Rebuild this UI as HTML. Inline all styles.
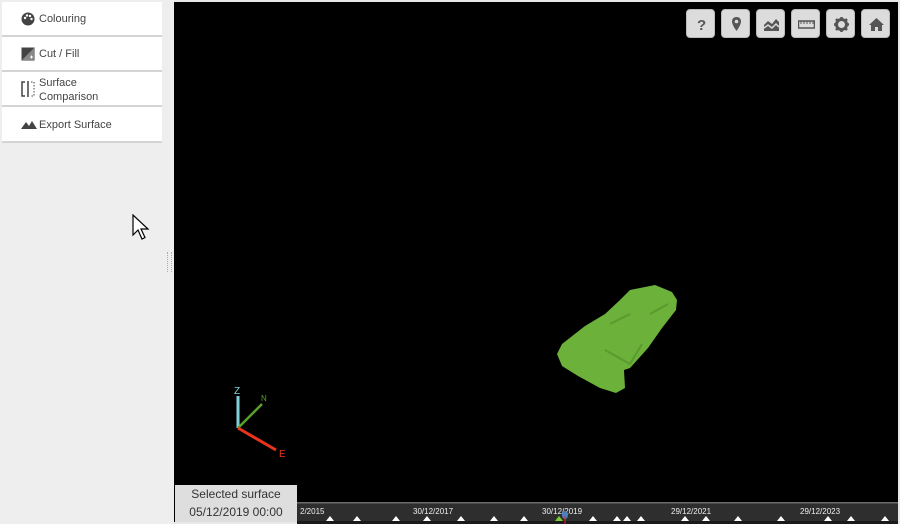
<!DOCTYPE html>
<html><head><style>
body{margin:0;width:900px;height:524px;background:#e8e8e8;position:relative;overflow:hidden;font-family:"Liberation Sans",sans-serif}
.side{position:absolute;left:0;top:0;width:174px;height:524px;background:#eeeeee}
.item{position:absolute;left:2px;width:160px;background:#fff;border-bottom:2px solid #d4d4d4;font-size:11px;color:#444}
.item span{position:absolute;left:37px}
.ic{position:absolute;left:19px}
.canvas{position:absolute;left:174px;top:2px;width:724px;height:520px;background:#000}
.btn{position:absolute;top:9px;width:29px;height:29px;background:#dcdcdc;border-radius:4px;border:1px solid #bbb;box-sizing:border-box}
.btn svg{position:absolute;left:6px;top:6px}
</style></head><body>
<div class="side">
<div class="item" style="top:2px;height:33px"><svg class="ic" style="top:10px" width="14" height="14" viewBox="0 0 14 14"><circle cx="7" cy="7" r="6.5" fill="#444"/><circle cx="4" cy="6" r="1.2" fill="#fff"/><circle cx="6" cy="3.5" r="1.2" fill="#fff"/><circle cx="9" cy="4" r="1.2" fill="#fff"/><circle cx="10.5" cy="7" r="1.2" fill="#fff"/></svg><span style="top:11px">Colouring</span></div>
<div class="item" style="top:37px;height:33px"><svg class="ic" style="top:10px" width="14" height="14" viewBox="0 0 14 14"><rect x="0.5" y="0.5" width="13" height="13" fill="#444"/><path d="M1 13L13 1V13Z" fill="#888"/><path d="M9 10h3M10.5 8.5v3" stroke="#fff"/></svg><span style="top:11px">Cut / Fill</span></div>
<div class="item" style="top:72px;height:33px"><svg class="ic" style="top:9px" width="14" height="16" viewBox="0 0 14 16"><path d="M4 1H1V15H4M7 0V16" stroke="#444" stroke-width="1.5" fill="none"/><path d="M10 1H13V15H10" stroke="#444" stroke-dasharray="1.5 1.5" fill="none"/></svg><span style="top:4px;line-height:14px">Surface<br>Comparison</span></div>
<div class="item" style="top:107px;height:34px"><svg class="ic" style="top:13px" width="16" height="9" viewBox="0 0 16 9"><path d="M0 9L5 2L8 6L11 1L16 9Z" fill="#444"/></svg><span style="top:12px">Export Surface</span></div>
<div style="position:absolute;left:167px;top:252px;width:3px;height:20px;border-left:1px dotted #aaa;border-right:1px dotted #aaa"></div>
<svg style="position:absolute;left:132px;top:214px" width="18" height="26" viewBox="0 0 18 26"><path d="M1 1V21L6 16L10 25L13 23.5L9 15H16Z" fill="#fff" stroke="#000" stroke-width="1.2"/></svg>
</div>
<div class="canvas">
<svg style="position:absolute;left:376px;top:282px" width="130" height="112" viewBox="0 0 130 112"><path d="M80 6L105 1L122 8L127 16L126 26L112 44L98 64L80 84L74 86L75 104L66 109L50 104L28 92L12 82L7 70L12 60L35 42L55 30L70 16Z" fill="#6bb13a"/><path d="M55 66L80 80L92 60M60 40L80 30M100 30L118 20" stroke="#5a9a2e" stroke-width="2" fill="none"/></svg>
<svg style="position:absolute;left:50px;top:380px" width="70" height="80" viewBox="0 0 70 80"><line x1="14" y1="46" x2="14" y2="14" stroke="#7fd3d8" stroke-width="3"/><line x1="14" y1="46" x2="38" y2="22" stroke="#5aa02c" stroke-width="2.5"/><line x1="14" y1="46" x2="52" y2="68" stroke="#e8341c" stroke-width="3"/><text x="10" y="12" fill="#7fd3d8" font-size="10">Z</text><text x="37" y="19" fill="#5aa02c" font-size="8">N</text><text x="55" y="75" fill="#e8341c" font-size="10">E</text></svg>
</div>
<div class="btn" style="left:686px"><svg width="17" height="17"><text x="4" y="14" font-size="15" font-weight="bold" fill="#555">?</text></svg></div>
<div class="btn" style="left:721px"><svg width="17" height="17" viewBox="0 0 17 17"><path d="M8.5 1C5.5 1 4 3 4 5.5C4 9 8.5 15 8.5 15S13 9 13 5.5C13 3 11.5 1 8.5 1Z" fill="#555"/><circle cx="8.5" cy="5.5" r="1.8" fill="#dcdcdc"/></svg></div>
<div class="btn" style="left:756px"><svg width="17" height="17" viewBox="0 0 17 17"><path d="M1 9L5 5L9 8L13 3L16 6V15H1Z" fill="#555"/><path d="M1 12L5 9L9 12L13 8L16 11" stroke="#dcdcdc" stroke-width="1.5" fill="none"/></svg></div>
<div class="btn" style="left:791px"><svg width="17" height="17" viewBox="0 0 17 17"><rect x="0.5" y="5" width="16" height="7" fill="none" stroke="#555" stroke-width="1.5"/><path d="M3 5v3M6 5v3M9 5v3M12 5v3M15 5v3" stroke="#555"/></svg></div>
<div class="btn" style="left:826px"><svg width="17" height="17" viewBox="0 0 17 17"><circle cx="8.5" cy="8.5" r="5" fill="none" stroke="#555" stroke-width="3"/><path d="M8.5 1v3M8.5 13v3M1 8.5h3M13 8.5h3M3 3l2 2M12 12l2 2M3 14l2-2M12 5l2-2" stroke="#555" stroke-width="2.5"/></svg></div>
<div class="btn" style="left:861px"><svg width="17" height="17" viewBox="0 0 17 17"><path d="M8.5 2L1 9H3V15H7V11H10V15H14V9H16Z" fill="#555"/></svg></div>
<div style="position:absolute;left:175px;top:485px;width:122px;height:37px;background:#dedede;font-size:12px;color:#333;text-align:center;line-height:18px">Selected surface<br>05/12/2019 00:00</div>
<svg style="position:absolute;left:297px;top:502px" width="601" height="22" viewBox="0 0 601 22"><rect width="601" height="22" fill="#2e2e2e"/><rect width="601" height="1.5" fill="#6a6a6a"/><rect y="19" width="601" height="3" fill="#1a1a1a"/>
<g fill="#eee" font-size="8"><text x="3" y="12">2/2015</text><text x="116" y="12">30/12/2017</text><text x="245" y="12">30/12/2019</text><text x="374" y="12">29/12/2021</text><text x="503" y="12">29/12/2023</text></g>
<g fill="#fff"><path d="M29 19l4-5 4 5zM56 19l4-5 4 5zM95 19l4-5 4 5zM126 19l4-5 4 5zM160 19l4-5 4 5zM193 19l4-5 4 5zM223 19l4-5 4 5zM292 19l4-5 4 5zM316 19l4-5 4 5zM326 19l4-5 4 5zM340 19l4-5 4 5zM384 19l4-5 4 5zM405 19l4-5 4 5zM437 19l4-5 4 5zM480 19l4-5 4 5zM527 19l4-5 4 5zM550 19l4-5 4 5zM584 19l4-5 4 5z"/></g>
<path d="M258 19l4-5 4 5z" fill="#7c3"/><ellipse cx="268" cy="13" rx="3" ry="4" fill="#4a7fc0"/><line x1="268" y1="14" x2="268" y2="22" stroke="#e22"/>
</svg>
</body></html>
